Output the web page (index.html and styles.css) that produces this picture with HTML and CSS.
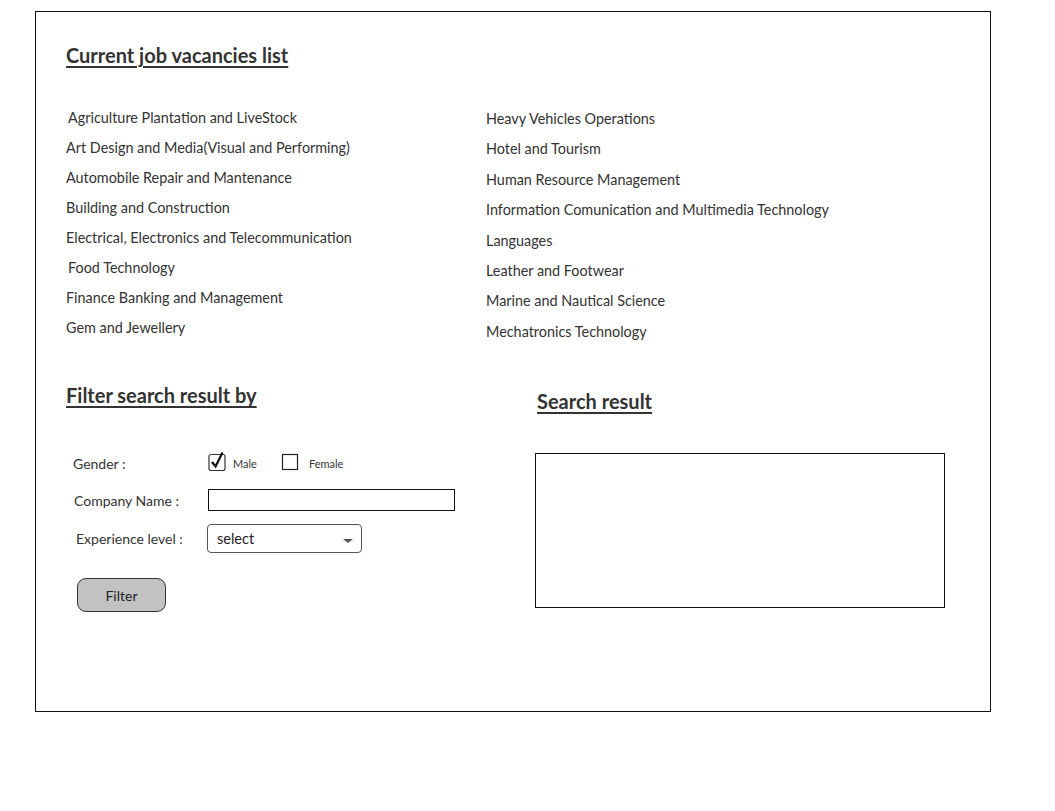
FILE: index.html
```html
<!DOCTYPE html>
<html>
<head>
<meta charset="utf-8">
<link rel="stylesheet" href="styles.css">
</head>
<body>
<div class="frame">
  <h1 class="heading main-heading">Current job vacancies list</h1>
  <div class="lists">
    <ul class="list">
      <li class="i1">Agriculture Plantation and LiveStock</li>
      <li>Art Design and Media(Visual and Performing)</li>
      <li>Automobile Repair and Mantenance</li>
      <li>Building and Construction</li>
      <li>Electrical, Electronics and Telecommunication</li>
      <li class="i1">Food Technology</li>
      <li>Finance Banking and Management</li>
      <li>Gem and Jewellery</li>
    </ul>
    <ul class="list right">
      <li>Heavy Vehicles Operations</li>
      <li>Hotel and Tourism</li>
      <li>Human Resource Management</li>
      <li>Information Comunication and Multimedia Technology</li>
      <li>Languages</li>
      <li>Leather and Footwear</li>
      <li>Marine and Nautical Science</li>
      <li>Mechatronics Technology</li>
    </ul>
  </div>
  <div class="bottom">
    <section class="filter">
      <h2 class="heading">Filter search result by</h2>
      <div class="form">
        <div class="row row-gender">
          <span class="label">Gender :</span>
          <div class="checks">
            <span class="check">
              <svg width="20" height="20" viewBox="0 0 20 20"><rect x="1" y="3.5" width="16" height="16" rx="2" fill="#fff" stroke="#333" stroke-width="1.2"/><path d="M4 11 L7.6 15.5 L14.5 1.5" fill="none" stroke="#111" stroke-width="2.2" stroke-linejoin="miter"/></svg>
              <span class="check-label">Male</span>
            </span>
            <span class="check">
              <svg width="20" height="20" viewBox="0 0 20 20"><rect x="1.5" y="3.5" width="15" height="15" fill="#fff" stroke="#222" stroke-width="1.2"/></svg>
              <span class="check-label">Female</span>
            </span>
          </div>
        </div>
        <div class="row row-company">
          <span class="label">Company Name :</span>
          <div class="input"></div>
        </div>
        <div class="row row-exp">
          <span class="label">Experience level :</span>
          <div class="select"><span>select</span><span class="caret"></span></div>
        </div>
        <button class="btn">Filter</button>
      </div>
    </section>
    <section class="result">
      <h2 class="heading">Search result</h2>
      <div class="result-box"></div>
    </section>
  </div>
</div>
</body>
</html>
```
FILE: styles.css
```css
* { box-sizing: border-box; }
body {
  margin: 0;
  background: #fff;
  font-family: "Lato", "Open Sans", sans-serif;
  color: #333;
}
.frame {
  margin: 11px 0 0 35px;
  width: 956px;
  height: 701px;
  border: 1px solid #111;
  padding: 31px 0 0 30px;
}
.heading {
  margin: 0;
  font-size: 20px;
  line-height: 24px;
  font-weight: 700;
  color: #333;
  text-decoration: underline;
  text-decoration-thickness: 2px;
  text-underline-offset: 3px;
}
.lists {
  display: flex;
  align-items: flex-start;
  height: 240px;
  margin-top: 36px;
}
.list {
  list-style: none;
  margin: 0;
  padding: 0;
  width: 419px;
  font-size: 14.4px;
  color: #333;
}
.list li {
  height: 30px;
  line-height: 30px;
  white-space: nowrap;
}
.list .i1 { padding-left: 2px; }
.list.right { padding-top: 1px; }
.list.right li { padding-left: 1px; height: 30.4px; }
.bottom {
  display: flex;
  margin-top: 40px;
}
.filter { width: 469px; }
.form {
  padding-left: 7px;
  margin-top: 46px;
  font-size: 14px;
  color: #333;
}
.row {
  display: flex;
  align-items: center;
}
.label { width: 135px; flex: none; }
.row-gender { height: 20px; }
.checks { display: flex; align-items: center; }
.check { display: flex; align-items: center; }
.check svg { display: block; margin-top: -4px; }
.check-label { font-size: 11px; margin-left: 5px; color: #333; }
.check + .check { margin-left: 24px; }
.check + .check .check-label { margin-left: 8px; }
.row-company { margin-top: 16px; }
.row-company .label { padding-left: 1px; }
.input {
  width: 247px;
  height: 22px;
  border: 1.5px solid #111;
  background: #fff;
}
.row-exp { margin-top: 13px; }
.row-exp .label { padding-left: 3px; width: 134px; }
.select {
  width: 155px;
  height: 29px;
  border: 1px solid #555;
  border-radius: 4px;
  display: flex;
  align-items: center;
  justify-content: space-between;
  padding: 0 8px 0 9px;
  color: #222;
  font-size: 14.5px;
}
.caret {
  width: 0;
  height: 0;
  border-left: 5px solid transparent;
  border-right: 5px solid transparent;
  border-top: 4px solid #555;
  margin-top: 4px;
}
.btn {
  display: block;
  margin: 25px 0 0 4px;
  width: 89px;
  height: 34px;
  background: #c2c2c2;
  border: 1px solid #333;
  border-radius: 9px;
  font-family: inherit;
  font-size: 14px;
  color: #222;
  padding: 0;
}
.result { padding-top: 6px; }
.result .heading { margin-left: 2px; }
.result-box {
  margin-top: 40px;
  width: 410px;
  height: 155px;
  border: 1.5px solid #111;
}
```
